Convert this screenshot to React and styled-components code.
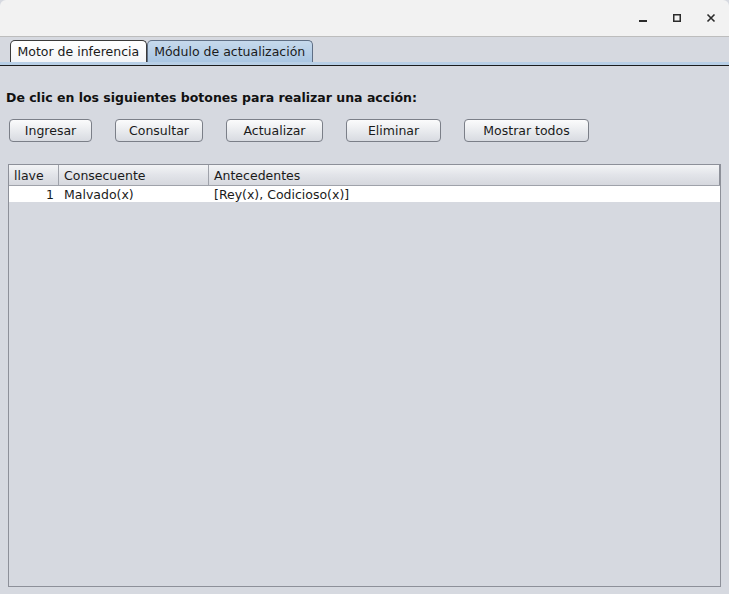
import React from "react";
import styled, { createGlobalStyle } from "styled-components";

const Global = createGlobalStyle`
  html, body { margin: 0; padding: 0; background: #d6d9e0; }
  body { font-family: "DejaVu Sans", sans-serif; font-size: 12px; color: #1a1a1a; }
  #root { height: 594px; }
`;

const Window = styled.div`
  width: 729px;
  height: 594px;
  display: flex;
  flex-direction: column;
  background: #d6d9e0;
  overflow: hidden;
`;

const TitleBar = styled.div`
  height: 36px;
  flex: none;
  background: #f2f2f2;
  border-bottom: 1px solid #bdbdbd;
  border-radius: 6px 6px 0 0;
  display: flex;
  justify-content: flex-end;
  align-items: center;
  padding-right: 10px;
  gap: 18px;
`;

const WinButton = styled.div`
  width: 16px;
  height: 16px;
  display: flex;
  align-items: center;
  justify-content: center;
`;

const TabStrip = styled.div`
  flex: none;
  display: flex;
  align-items: flex-end;
  padding: 3px 0 0 10px;
  height: 22px;
  border-bottom: 3px solid #b8cfe6;
  position: relative;
  &::after {
    content: "";
    position: absolute;
    left: 0;
    right: 0;
    bottom: -4px;
    height: 1px;
    background: #1c1c1c;
  }
`;

const Tab = styled.div`
  height: 22px;
  box-sizing: border-box;
  padding: 0 6.5px;
  margin-right: 0;
  display: flex;
  align-items: center;
  font-size: 12.5px;
  border: 1px solid ${(p) => (p.$active ? "#5f6f85" : "#3a3a3a")};
  border-bottom: none;
  border-radius: 5px 5px 0 0;
  background: ${(p) =>
    p.$active
      ? "linear-gradient(#c6d9ec, #aac6e2)"
      : "linear-gradient(#ffffff, #f4f5f7)"};
  color: #1a1a1a;
`;

const Content = styled.div`
  flex: 1;
  display: flex;
  flex-direction: column;
  padding: 25px 8px 7px 8px;
`;

const Heading = styled.div`
  font-family: "DejaVu Sans", sans-serif;
  font-weight: bold;
  font-size: 12.5px;
  margin-left: -2px;
  height: 18px;
  color: #111;
`;

const ButtonRow = styled.div`
  display: flex;
  gap: 23px;
  margin-top: 11px;
  padding-left: 1px;
`;

const Button = styled.button`
  height: 23px;
  width: ${(p) => p.$w}px;
  box-sizing: border-box;
  border: 1px solid #7b7f88;
  border-radius: 4px;
  background: linear-gradient(#fbfbfc, #e6e8ec 60%, #d8dbe1);
  font-family: "DejaVu Sans", sans-serif;
  font-size: 12.5px;
  color: #1a1a1a;
  padding: 0;
`;

const TableBox = styled.div`
  margin-top: 22px;
  flex: 1;
  border: 1px solid #8d9099;
  display: flex;
  flex-direction: column;
`;

const Row = styled.div`
  display: grid;
  grid-template-columns: 50px 150px 1fr;
  height: ${(p) => (p.$header ? 21 : 16)}px;
  box-sizing: border-box;
  background: ${(p) =>
    p.$header ? "linear-gradient(#f3f4f6, #e2e4e9 50%, #d6d8de)" : "#ffffff"};
  border-bottom: ${(p) => (p.$header ? "1px solid #9fa2aa" : "none")};
`;

const HeaderCell = styled.div`
  border-right: 1px solid #9fa2aa;
  padding-left: 5px;
  display: flex;
  align-items: center;
  font-size: 12.5px;
  &:last-child { border-right: 1px solid #8d9099; }
`;

const Cell = styled.div`
  padding: 0 5px;
  display: flex;
  align-items: center;
  justify-content: ${(p) => (p.$right ? "flex-end" : "flex-start")};
  font-size: 12.5px;
`;

export default function App() {
  const buttons = [
    ["Ingresar", 83],
    ["Consultar", 88],
    ["Actualizar", 97],
    ["Eliminar", 95],
    ["Mostrar todos", 125],
  ];
  return (
    <>
      <Global />
      <Window>
        <TitleBar>
          <WinButton>
            <svg width="10" height="10" viewBox="0 0 10 10">
              <rect x="1" y="7" width="8" height="2" fill="#2b2b2b" />
            </svg>
          </WinButton>
          <WinButton>
            <svg width="10" height="10" viewBox="0 0 10 10">
              <rect x="1.75" y="1.75" width="6.5" height="6.5" fill="none" stroke="#2b2b2b" strokeWidth="1.5" />
            </svg>
          </WinButton>
          <WinButton>
            <svg width="10" height="10" viewBox="0 0 10 10">
              <path d="M1.5 1.5 L8.5 8.5 M8.5 1.5 L1.5 8.5" stroke="#2b2b2b" strokeWidth="1.6" />
            </svg>
          </WinButton>
        </TitleBar>
        <TabStrip>
          <Tab>Motor de inferencia</Tab>
          <Tab $active>Módulo de actualización</Tab>
        </TabStrip>
        <Content>
          <Heading>De clic en los siguientes botones para realizar una acción:</Heading>
          <ButtonRow>
            {buttons.map(([t, w]) => (
              <Button key={t} $w={w}>{t}</Button>
            ))}
          </ButtonRow>
          <TableBox>
            <Row $header>
              <HeaderCell>llave</HeaderCell>
              <HeaderCell>Consecuente</HeaderCell>
              <HeaderCell>Antecedentes</HeaderCell>
            </Row>
            <Row>
              <Cell $right>1</Cell>
              <Cell>Malvado(x)</Cell>
              <Cell>[Rey(x), Codicioso(x)]</Cell>
            </Row>
          </TableBox>
        </Content>
      </Window>
    </>
  );
}
